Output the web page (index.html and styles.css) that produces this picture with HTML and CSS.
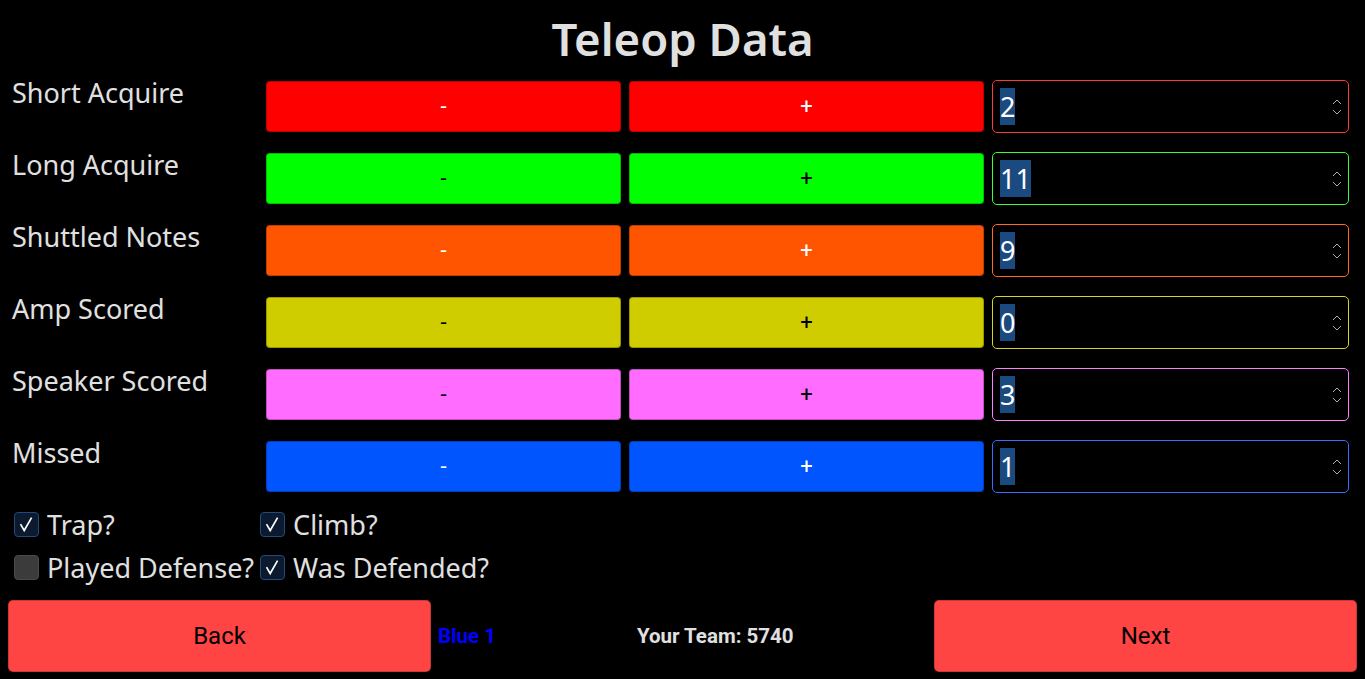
FILE: index.html
```html
<!DOCTYPE html>
<html lang="en">
<head>
  <meta charset="UTF-8">
  <meta name="viewport" content="width=device-width, initial-scale=1.0">
  <title>Teleop Data</title>
  <link rel="stylesheet" href="styles.css">
</head>
<body>
  <h1 class="title">Teleop Data</h1>

  <main class="counters">
    <div class="label">Short Acquire</div>
    <button class="step red">-</button>
    <button class="step red">+</button>
    <div class="count border-red"><span class="value">2</span>
      <svg class="spin" viewBox="0 0 10 16"><path d="M1 5 L5 1 L9 5 M1 11 L5 15 L9 11"/></svg></div>

    <div class="label">Long Acquire</div>
    <button class="step green">-</button>
    <button class="step green">+</button>
    <div class="count border-green"><span class="value">11</span>
      <svg class="spin" viewBox="0 0 10 16"><path d="M1 5 L5 1 L9 5 M1 11 L5 15 L9 11"/></svg></div>

    <div class="label">Shuttled Notes</div>
    <button class="step orange">-</button>
    <button class="step orange">+</button>
    <div class="count border-orange"><span class="value">9</span>
      <svg class="spin" viewBox="0 0 10 16"><path d="M1 5 L5 1 L9 5 M1 11 L5 15 L9 11"/></svg></div>

    <div class="label">Amp Scored</div>
    <button class="step yellow">-</button>
    <button class="step yellow">+</button>
    <div class="count border-yellow"><span class="value">0</span>
      <svg class="spin" viewBox="0 0 10 16"><path d="M1 5 L5 1 L9 5 M1 11 L5 15 L9 11"/></svg></div>

    <div class="label">Speaker Scored</div>
    <button class="step pink">-</button>
    <button class="step pink">+</button>
    <div class="count border-pink"><span class="value">3</span>
      <svg class="spin" viewBox="0 0 10 16"><path d="M1 5 L5 1 L9 5 M1 11 L5 15 L9 11"/></svg></div>

    <div class="label">Missed</div>
    <button class="step blue">-</button>
    <button class="step blue">+</button>
    <div class="count border-blue"><span class="value">1</span>
      <svg class="spin" viewBox="0 0 10 16"><path d="M1 5 L5 1 L9 5 M1 11 L5 15 L9 11"/></svg></div>
  </main>

  <section class="checks">
    <label class="check"><span class="box on"><svg viewBox="0 0 25 25"><path d="M6 12 L10 19 L18 5"/></svg></span>Trap?</label>
    <label class="check"><span class="box on"><svg viewBox="0 0 25 25"><path d="M6 12 L10 19 L18 5"/></svg></span>Climb?</label>
    <label class="check"><span class="box"></span>Played Defense?</label>
    <label class="check"><span class="box on"><svg viewBox="0 0 25 25"><path d="M6 12 L10 19 L18 5"/></svg></span>Was Defended?</label>
  </section>

  <footer class="nav">
    <button class="nav-button">Back</button>
    <div class="info">
      <span class="alliance">Blue 1</span>
      <span class="team">Your Team: 5740</span>
    </div>
    <button class="nav-button">Next</button>
  </footer>
</body>
</html>
```

FILE: styles.css
```css
body {
  margin: 0 8px;
  background: #000;
  color: #e0e0e0;
  font-family: "Noto Sans", "Open Sans", sans-serif;
}

.title {
  margin: 12px 0 15px;
  text-align: center;
  font-size: 45.5px;
  font-weight: 600;
  line-height: 53px;
  color: #e0e0e0;
}

.counters {
  display: grid;
  grid-template-columns: 246px 355px 355px 357px;
  column-gap: 8px;
  row-gap: 19px;
  padding-left: 4px;
  align-items: center;
}

.label {
  align-self: start;
  font-size: 27px;
  line-height: 26px;
}

.step {
  height: 51px;
  border-radius: 4px;
  border: 1px solid rgba(0, 0, 0, 0.25);
  font-family: Roboto, "Liberation Sans", sans-serif;
  font-size: 22px;
  padding: 0;
}

.red { background: #ff0000; color: #fff; }
.green { background: #00ff00; color: #000; }
.orange { background: #ff5500; color: #fff; }
.yellow { background: #cfcc00; color: #000; }
.pink { background: #ff6cff; color: #000; }
.blue { background: #0055ff; color: #fff; }

.count {
  height: 51px;
  border: 1px solid;
  border-radius: 5px;
  display: flex;
  align-items: center;
  justify-content: space-between;
  padding: 0 6px 0 7px;
}

.border-red { border-color: #ff3838; }
.border-green { border-color: #38ff38; }
.border-orange { border-color: #ff6a26; }
.border-yellow { border-color: #d6d424; }
.border-pink { border-color: #ff80ff; }
.border-blue { border-color: #3a6cff; }

.value {
  background: #1b4a80;
  color: #fff;
  font-size: 27px;
  line-height: 37px;
}

.spin {
  width: 10px;
  height: 16px;
  fill: none;
  stroke: #b0b0b0;
  stroke-width: 1;
}

.checks {
  display: grid;
  grid-template-columns: auto auto;
  justify-content: start;
  column-gap: 6px;
  margin-top: 10px;
  padding-left: 6px;
}

.check {
  display: flex;
  align-items: center;
  gap: 8px;
  height: 43px;
  font-size: 27px;
}

.box {
  width: 25px;
  height: 25px;
  box-sizing: border-box;
  border-radius: 4px;
  background: #3b3b3b;
  border: 1px solid #4a4a4a;
}

.box.on {
  background: #0b1a2e;
  border-color: #24497a;
}

.box svg {
  display: block;
  width: 23px;
  height: 23px;
  fill: none;
  stroke: #fff;
  stroke-width: 1.8;
}

.nav {
  display: flex;
  align-items: center;
  margin-top: 11px;
  gap: 7px;
}

.nav-button {
  flex: 0 0 423px;
  height: 72px;
  background: #ff4444;
  color: #000;
  border: 1px solid rgba(0, 0, 0, 0.2);
  border-radius: 5px;
  font-family: Roboto, "Liberation Sans", sans-serif;
  font-size: 24px;
}

.info {
  flex: 1;
  display: flex;
  align-items: center;
  font-family: Roboto, "Liberation Sans", sans-serif;
  font-size: 20.5px;
  font-weight: 700;
}

.alliance {
  color: #0000ff;
}

.team {
  margin-left: 141px;
  color: #e0e0e0;
}
```
